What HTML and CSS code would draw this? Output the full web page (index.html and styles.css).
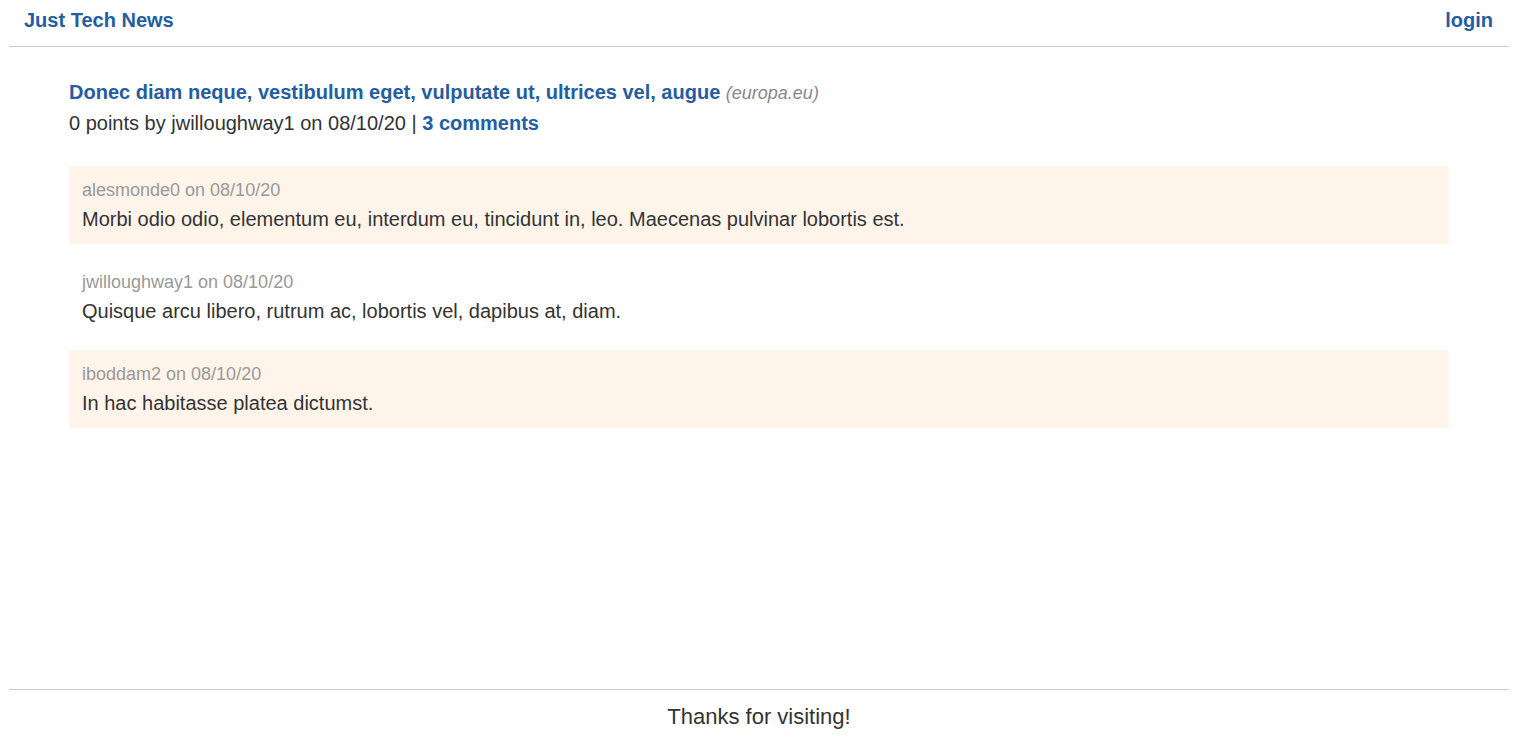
FILE: index.html
```html
<!DOCTYPE html>
<html lang="en">
<head>
<meta charset="utf-8">
<title>Just Tech News</title>
<link rel="stylesheet" href="styles.css">
</head>
<body>
<div class="page">
  <header class="site-header">
    <a class="brand" href="#">Just Tech News</a>
    <a class="nav-link" href="#">login</a>
  </header>
  <main class="content">
    <article class="post">
      <div class="post-title"><a href="#">Donec diam neque, vestibulum eget, vulputate ut, ultrices vel, augue</a> <span class="domain">(europa.eu)</span></div>
      <div class="post-meta">0 points by jwilloughway1 on 08/10/20 | <a href="#">3 comments</a></div>
    </article>
    <section class="comments">
      <div class="comment shaded">
        <div class="comment-meta">alesmonde0 on 08/10/20</div>
        <div class="comment-text">Morbi odio odio, elementum eu, interdum eu, tincidunt in, leo. Maecenas pulvinar lobortis est.</div>
      </div>
      <div class="comment">
        <div class="comment-meta">jwilloughway1 on 08/10/20</div>
        <div class="comment-text">Quisque arcu libero, rutrum ac, lobortis vel, dapibus at, diam.</div>
      </div>
      <div class="comment shaded">
        <div class="comment-meta">iboddam2 on 08/10/20</div>
        <div class="comment-text">In hac habitasse platea dictumst.</div>
      </div>
    </section>
  </main>
  <footer class="site-footer">Thanks for visiting!</footer>
</div>
</body>
</html>
```
FILE: styles.css
```css
html, body {
  margin: 0;
  padding: 0;
  background: #fff;
}
body {
  font-family: "Liberation Sans", Arial, sans-serif;
  color: #333;
}
a {
  color: #245da0;
  text-decoration: none;
  font-weight: bold;
}
.page {
  width: 1500px;
  margin-left: 9px;
  min-height: 740px;
  display: flex;
  flex-direction: column;
}
.site-header {
  display: flex;
  justify-content: space-between;
  align-items: center;
  padding: 0 16px 5px 15px;
  height: 41px;
  border-bottom: 1px solid #ccc;
  font-size: 20px;
}
.content {
  flex: 1;
  padding: 30px 60px 0;
}
.post-title {
  font-size: 20px;
  line-height: 30px;
}
.domain {
  font-style: italic;
  color: #888;
  font-size: 18px;
  font-weight: normal;
}
.post-meta {
  font-size: 20px;
  line-height: 30px;
}
.comments {
  margin-top: 28px;
  display: flex;
  flex-direction: column;
  gap: 14px;
}
.comment {
  padding: 13px 13px 11px;
  height: 78px;
  box-sizing: border-box;
  border-radius: 2px;
}
.comment.shaded {
  background: #fff4ea;
}
.comment-meta {
  font-size: 18px;
  line-height: 22px;
  color: #999;
}
.comment-text {
  font-size: 20px;
  line-height: 28px;
  margin-top: 4px;
}
.site-footer {
  border-top: 1px solid #ccc;
  height: 51px;
  display: flex;
  align-items: center;
  justify-content: center;
  font-size: 22px;
  padding-top: 4px;
  box-sizing: border-box;
}
```
